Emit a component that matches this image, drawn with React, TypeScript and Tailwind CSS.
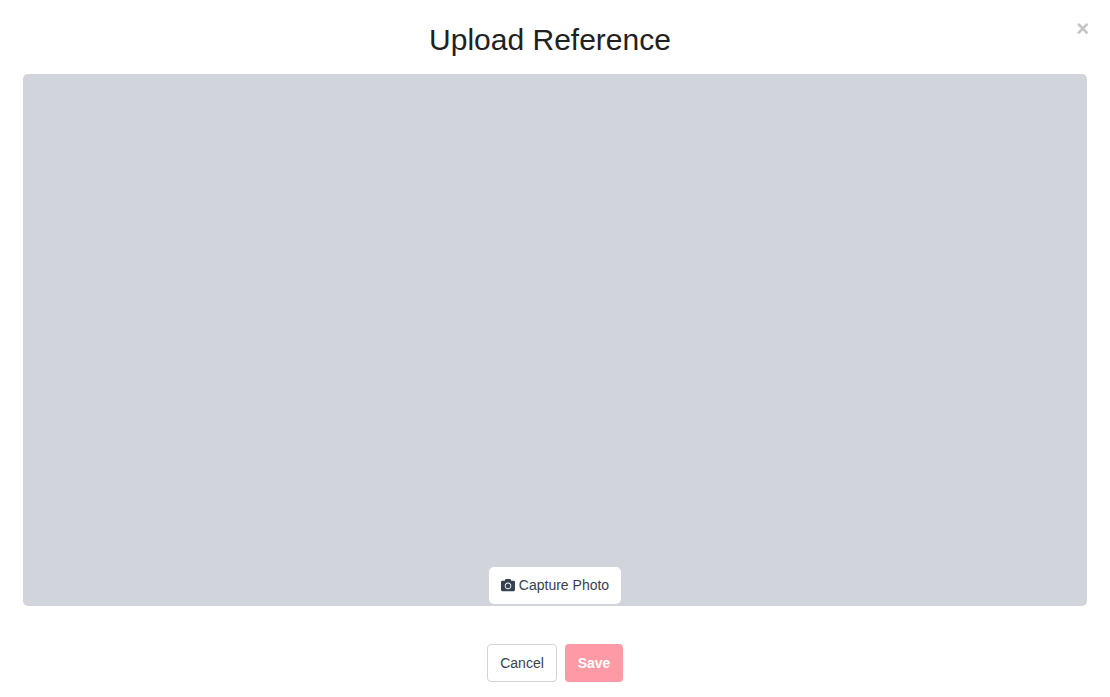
import { FaCamera } from 'react-icons/fa'

export default function App() {
  return (
    <div className="relative h-[697px] w-[1110px] overflow-hidden bg-white font-['Liberation_Sans',Arial,sans-serif]">
      {/* Close button */}
      <button className="absolute right-[21px] top-[17px] text-[22px] font-bold leading-[24px] text-[#c4c4c4]">
        ×
      </button>

      <div className="flex flex-col px-[23px]">
        <h1 className="h-[74px] pr-[10px] pt-[22px] text-center text-[30px] font-normal leading-[36px] text-[#212121]">
          Upload Reference
        </h1>

        {/* Camera preview */}
        <div className="flex h-[532px] items-end justify-center rounded-[5px] bg-[#d1d5db] pb-[2px]">
          <button className="flex h-[37px] w-[132px] items-center justify-center gap-[4px] rounded-[5px] bg-white text-[14px] text-[#374151]">
            <FaCamera className="mb-[2px] h-[14px] w-[14px]" />
            Capture Photo
          </button>
        </div>

        {/* Actions */}
        <div className="mt-[38px] flex justify-center gap-[8px]">
          <button className="h-[38px] w-[70px] rounded-[4px] border border-[#d1d5db] bg-white text-[14px] text-[#374151]">
            Cancel
          </button>
          <button className="h-[38px] w-[58px] rounded-[4px] bg-[#fe9aa5] text-[14px] font-bold text-white">
            Save
          </button>
        </div>
      </div>
    </div>
  )
}
